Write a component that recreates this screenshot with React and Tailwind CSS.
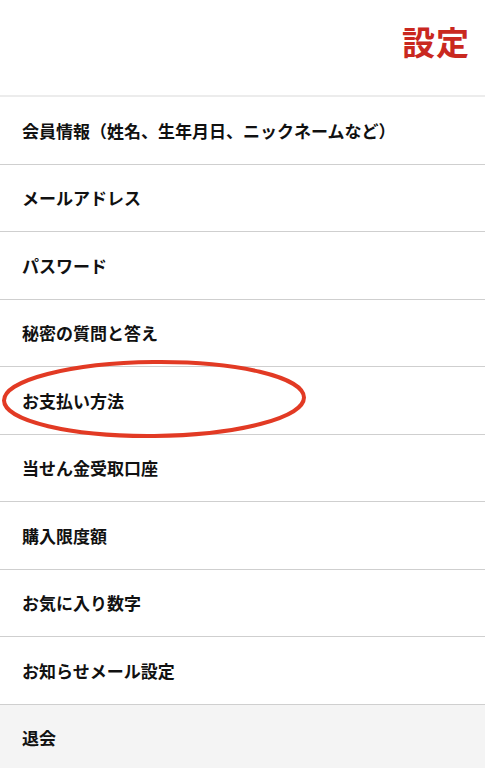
import React from "react";

const items = [
  "会員情報（姓名、生年月日、ニックネームなど）",
  "メールアドレス",
  "パスワード",
  "秘密の質問と答え",
  "お支払い方法",
  "当せん金受取口座",
  "購入限度額",
  "お気に入り数字",
  "お知らせメール設定",
];

export default function App() {
  return (
    <div
      className="w-[485px] h-[768px] overflow-hidden bg-white relative"
      style={{ fontFamily: '"Noto Sans CJK JP", "Noto Sans", sans-serif' }}
    >
      {/* ヘッダー */}
      <div className="h-[97px] border-b-2 border-[#ececec] flex justify-end items-start pr-[15px] pt-[19px]">
        <h1 className="text-[33px] font-bold text-[#c9281f] leading-[44px] tracking-[1px]">設定</h1>
      </div>

      {/* メニュー */}
      <ul>
        {items.map((label) => (
          <li
            key={label}
            className="h-[67.5px] border-b border-[#cfcfcf] flex items-center pl-[22px] text-[17px] font-bold text-[#111]"
          >
            {label}
          </li>
        ))}
        <li className="h-[67px] bg-[#f4f4f4] flex items-center pl-[22px] text-[17px] font-bold text-[#111]">
          退会
        </li>
      </ul>

      {/* 赤丸 */}
      <svg
        className="absolute left-0 top-[358px] pointer-events-none"
        width="312"
        height="84"
        viewBox="0 0 312 84"
      >
        <ellipse
          cx="154"
          cy="41"
          rx="150"
          ry="37"
          fill="none"
          stroke="#e23a24"
          strokeWidth="4"
          transform="rotate(-0.6 154 41)"
        />
      </svg>
    </div>
  );
}
